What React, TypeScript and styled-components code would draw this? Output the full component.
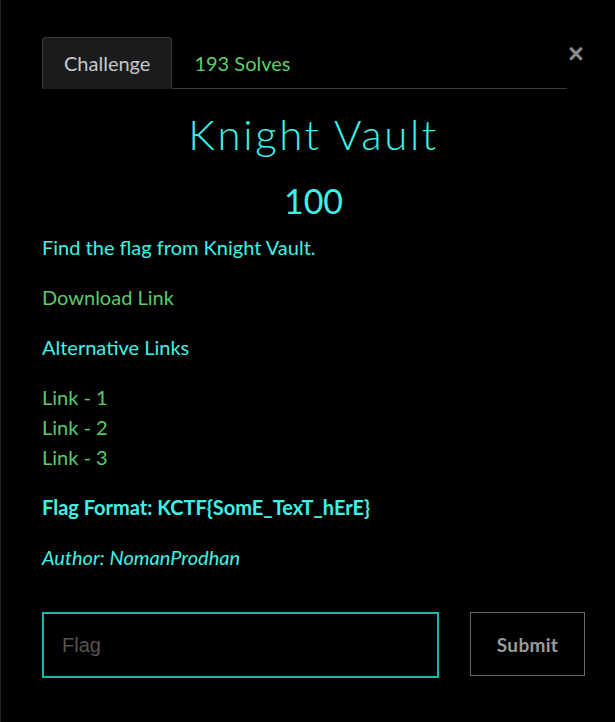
import React from "react";
import styled, { createGlobalStyle } from "styled-components";

const Global = createGlobalStyle`
  html, body { margin: 0; padding: 0; background: #000; }
  body { font-family: Lato, "Noto Sans", sans-serif; }
  * { box-sizing: border-box; }
`;

const Modal = styled.div`
  min-height: 722px;
  background: #000;
  border-left: 1px solid #1f1f1f;
  padding: 37px 30px 0 41px;
`;

const Header = styled.div`
  display: flex;
  align-items: flex-start;
`;

const Nav = styled.div`
  flex: 1;
  display: flex;
  border-bottom: 1px solid #3a3a3a;
`;

const Tab = styled.div<{ $active?: boolean }>`
  height: 52px;
  padding: 0 21px;
  display: flex;
  align-items: center;
  font-size: 20px;
  margin-bottom: -1px;
  color: ${(p) => (p.$active ? "#c8c8c8" : "#5ccf6c")};
  background: ${(p) => (p.$active ? "#1a1b1d" : "transparent")};
  border: 1px solid ${(p) => (p.$active ? "#3a3a3a" : "transparent")};
  border-bottom-color: ${(p) => (p.$active ? "#1a1b1d" : "transparent")};
  border-radius: 4px 4px 0 0;
`;

const Close = styled.div`
  width: 18px;
  margin-top: 4px;
  text-align: center;
  font-family: "Liberation Sans", Arial, sans-serif;
  font-weight: 700;
  font-size: 27px;
  line-height: 27px;
  color: #8a8a8a;
`;

const Content = styled.div``;

const Title = styled.h2`
  margin: 18px 0 0;
  text-align: center;
  font-family: Lato, sans-serif;
  font-weight: 300;
  font-size: 42px;
  line-height: 54px;
  letter-spacing: 2.6px;
  color: #3ff2e8;
`;

const Points = styled.h3`
  margin: 19px 0 0;
  text-align: center;
  font-weight: 400;
  font-size: 34px;
  line-height: 42px;
  color: #3ff2e8;
`;

const Para = styled.p<{ $tone?: "cyan" | "green"; $bold?: boolean; $italic?: boolean }>`
  margin: 0 0 20px;
  font-size: 20px;
  line-height: 30px;
  color: ${(p) => (p.$tone === "green" ? "#5cc96a" : "#3ff2e8")};
  font-weight: ${(p) => (p.$bold ? 700 : 400)};
  font-style: ${(p) => (p.$italic ? "italic" : "normal")};
`;

const Body = styled.div`
  margin-top: 10px;
`;

const Form = styled.div`
  display: flex;
  align-items: flex-start;
  gap: 31px;
  margin-top: 40px;
`;

const Input = styled.input`
  width: 397px;
  height: 66px;
  background: #000;
  border: 2px solid #19b8ab;
  padding: 0 18px;
  font-family: "Liberation Sans", Arial, sans-serif;
  font-size: 20px;
  color: #ddd;
  outline: none;
  &::placeholder { color: #555250; }
`;

const Submit = styled.button`
  width: 115px;
  height: 64px;
  background: #000;
  border: 1px solid #6a645f;
  font-family: Lato, sans-serif;
  font-weight: 700;
  font-size: 19px;
  letter-spacing: 0.3px;
  color: #9a9c9a;
  cursor: pointer;
`;

export default function App() {
  return (
    <>
      <Global />
      <Modal>
        <Header>
          <Nav>
            <Tab $active>Challenge</Tab>
            <Tab>193 Solves</Tab>
          </Nav>
          <Close>×</Close>
        </Header>
        <Content>
          <Title>Knight Vault</Title>
          <Points>100</Points>
          <Body>
            <Para>Find the flag from Knight Vault.</Para>
            <Para $tone="green">Download Link</Para>
            <Para>Alternative Links</Para>
            <Para $tone="green">
              Link - 1<br />
              Link - 2<br />
              Link - 3
            </Para>
            <Para $bold>Flag Format: KCTF{"{SomE_TexT_hErE}"}</Para>
            <Para $italic>Author: NomanProdhan</Para>
          </Body>
          <Form>
            <Input placeholder="Flag" />
            <Submit>Submit</Submit>
          </Form>
        </Content>
      </Modal>
    </>
  );
}
